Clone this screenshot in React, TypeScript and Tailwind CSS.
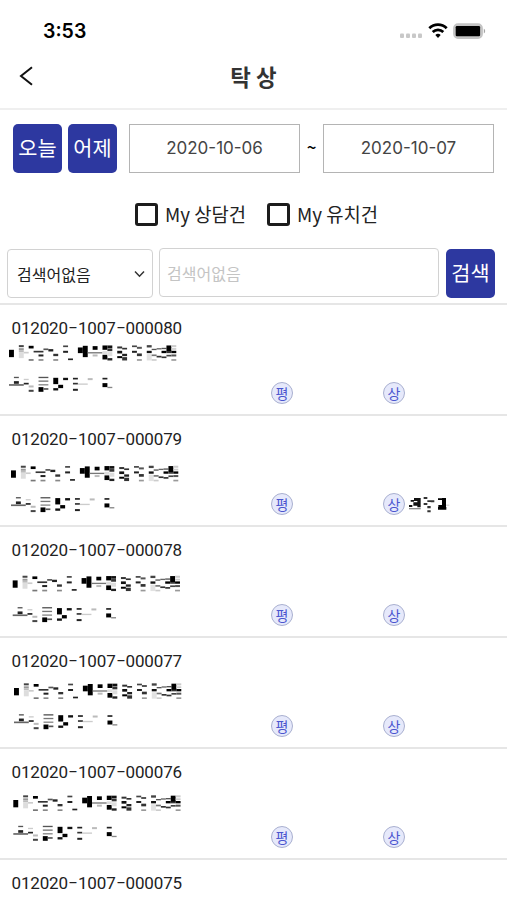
import { useState } from "react";

type Block = [x: number, y: number, w: number, h: number, fill: string];

type Consult = {
  id: string;
  // offsets of the two masked lines inside the row
  mask: { x: number; nameY: number; phoneY: number } | null;
  hasOwner?: boolean;
};

const CONSULTS: Consult[] = [
  { id: "012020-1007-000080", mask: { x: 9, nameY: 3.8, phoneY: 35.8 } },
  { id: "012020-1007-000079", mask: { x: 11, nameY: 13.4, phoneY: 45.1 }, hasOwner: true },
  { id: "012020-1007-000078", mask: { x: 12.7, nameY: 12.4, phoneY: 44.1 } },
  { id: "012020-1007-000077", mask: { x: 14, nameY: 9, phoneY: 40.2 } },
  { id: "012020-1007-000076", mask: { x: 13.3, nameY: 10, phoneY: 40.8 } },
  { id: "012020-1007-000075", mask: null },
];

// column, top, column span, height, fill
const NAME_BLOCKS: Block[] = [
  [0, 15, 1, 22, "#000"],
  [2, 1, 1, 6, "#444"],
  [2, 10, 1, 6, "#999"],
  [2, 16, 1, 6, "#bbb"],
  [2, 22, 1, 18, "#ddd"],
  [3, 21, 1, 5, "#ccc"],
  [4, 3, 1, 8, "#000"],
  [4, 43, 1, 5, "#777"],
  [5, 18, 2, 5, "#333"],
  [6, 29, 1, 6, "#222"],
  [6, 43, 1, 5, "#888"],
  [7, 11, 1, 5, "#555"],
  [8, 13, 1, 7, "#222"],
  [9, 27, 1, 7, "#333"],
  [9, 43, 1, 5, "#888"],
  [11, 2, 1, 5, "#444"],
  [11, 18, 1, 6, "#222"],
  [12, 41, 1, 5, "#222"],
  [14, 8, 1, 17, "#000"],
  [15, 3, 1, 34, "#000"],
  [16, 22, 3, 4, "#777"],
  [17, 4, 1, 11, "#000"],
  [17, 29, 1, 6, "#bbb"],
  [19, 2, 1, 13, "#000"],
  [19, 19, 1, 9, "#ddd"],
  [19, 30, 1, 14, "#000"],
  [20, 2, 1, 8, "#111"],
  [20, 11, 1, 8, "#333"],
  [20, 22, 1, 12, "#ddd"],
  [20, 40, 1, 7, "#222"],
  [22, 5, 1, 6, "#333"],
  [22, 18, 1, 8, "#111"],
  [22, 34, 1, 6, "#000"],
  [23, 9, 1, 5, "#333"],
  [23, 27, 1, 7, "#222"],
  [23, 37, 1, 10, "#333"],
  [25, 2, 1, 5, "#444"],
  [25, 18, 1, 6, "#222"],
  [26, 6, 1, 6, "#555"],
  [26, 26, 1, 8, "#333"],
  [26, 43, 1, 5, "#999"],
  [28, 1, 1, 7, "#444"],
  [28, 18, 1, 7, "#111"],
  [28, 28, 1, 19, "#e2e2e2"],
  [29, 12, 1, 4, "#555"],
  [29, 29, 1, 5, "#777"],
  [29, 43, 1, 5, "#ccc"],
  [30, 10, 1, 4, "#666"],
  [30, 33, 1, 5, "#333"],
  [31, 9, 1, 4, "#555"],
  [31, 18, 1, 7, "#000"],
  [31, 35, 1, 5, "#333"],
  [32, 2, 1, 19, "#000"],
  [32, 20, 1, 5, "#333"],
  [32, 30, 1, 5, "#444"],
  [33, 1, 1, 6, "#ccc"],
  [33, 10, 1, 5, "#ccc"],
  [33, 18, 1, 7, "#000"],
  [33, 29, 1, 6, "#555"],
  [33, 43, 1, 5, "#999"],
];

const PHONE_BLOCKS: Block[] = [
  [0, 22, 3, 5, "#666"],
  [1, 0, 1, 4, "#555"],
  [1, 13, 1, 8, "#222"],
  [3, 6, 1, 4, "#ccc"],
  [3, 18, 1, 5, "#222"],
  [4, 26, 1, 6, "#bbb"],
  [4, 39, 1, 6, "#444"],
  [6, 0, 2, 4, "#555"],
  [6, 11, 2, 4, "#777"],
  [6, 22, 2, 4, "#888"],
  [6, 31, 1, 14, "#000"],
  [7, 34, 1, 5, "#555"],
  [9, 3, 1, 19, "#000"],
  [9, 34, 1, 7, "#111"],
  [10, 24, 1, 10, "#000"],
  [11, 3, 1, 7, "#111"],
  [13, 3, 1, 5, "#222"],
  [13, 18, 1, 5, "#333"],
  [13, 36, 1, 6, "#222"],
  [14, 20, 2, 4, "#ccc"],
  [16, 4, 1, 6, "#bbb"],
  [19, 3, 1, 5, "#222"],
  [19, 19, 1, 12, "#000"],
  [20, 30, 1, 4, "#888"],
];

function Blocks({ blocks }: { blocks: Block[] }) {
  return (
    <>
      {blocks.map(([x, y, w, h, fill], i) => (
        <rect key={i} x={x * 4.92} y={y / 3} width={w * 4.92} height={h / 3} fill={fill} />
      ))}
    </>
  );
}

function OwnerMask() {
  return (
    <svg width="42" height="18" viewBox="0 0 126 54" className="ml-[3px] mt-[80px]">
      <path d="M8 12h10v5H8zM3 27h10v6H3zM18 6h20v9H18zM28 12h10v22H28zM16 19h12v10H16z" fill="#111" />
      <path d="M3 36h35v4H3z" fill="#888" />
      <path d="M47 3h11v6H47zM47 21h11v6H47zM58 13h11v5H58zM58 30h10v7H58zM58 43h10v6H58zM68 13h11v6H68z" fill="#333" />
      <path d="M90 33h25v8H90zM102 6h12v30h-12zM90 7h12v5H90zM91 27h11v8H91z" fill="#000" />
      <path d="M114 26h10v3h-10z" fill="#ccc" />
    </svg>
  );
}

function Badge({ label }: { label: string }) {
  return (
    <span className="mt-[77px] flex h-[22px] w-[22px] shrink-0 items-center justify-center rounded-full border border-[#a9b0d0] bg-[#e6e9fb] text-[14px] leading-none text-[#4a55cf]">
      <span className="-mt-px">{label}</span>
    </span>
  );
}

function ConsultRow({ item }: { item: Consult }) {
  return (
    <li className="flex h-[111px] items-start overflow-hidden border-t-2 border-[#e6e6e6]">
      <div className="w-[271px] shrink-0">
        <div className="flex h-[36px] pl-[11.5px] pt-[11px] font-['Roboto','Liberation_Sans',sans-serif] text-[17px] leading-[24px] text-[#222]">
          {item.id.split(/(-)/).map((part, i) =>
            part === "-" ? (
              <span key={i} className="-mt-px inline-block w-[10px] origin-center scale-x-[1.7] text-center">
                -
              </span>
            ) : (
              <span key={i} className="tracking-[-0.15px]">
                {part}
              </span>
            ),
          )}
        </div>
        {item.mask ? (
          <svg width="200" height="70">
            <g transform={`translate(${item.mask.x} ${item.mask.nameY})`}>
              <Blocks blocks={NAME_BLOCKS} />
            </g>
            <g transform={`translate(${item.mask.x} ${item.mask.phoneY})`}>
              <Blocks blocks={PHONE_BLOCKS} />
            </g>
          </svg>
        ) : null}
      </div>
      {item.mask ? (
        <>
          <div className="flex w-[112px] shrink-0">
            <Badge label="평" />
          </div>
          <div className="flex">
            <Badge label="상" />
            {item.hasOwner ? <OwnerMask /> : null}
          </div>
        </>
      ) : null}
    </li>
  );
}

function StatusBar() {
  return (
    <div className="flex h-[52px] shrink-0 items-start justify-between pl-[43px] pr-[20px] pt-[20px]">
      <span className="font-['Inter','Liberation_Sans',sans-serif] text-[19.5px] font-semibold leading-[23px] text-black">
        3:53
      </span>
      <svg width="88" height="22" viewBox="0 0 88 22">
        <g fill="#c8c8c8">
          <rect x="1" y="13.5" width="4" height="4.5" rx="1" />
          <rect x="7" y="13.5" width="4" height="4.5" rx="1" />
          <rect x="13" y="13.5" width="4" height="4.5" rx="1" />
          <rect x="19" y="13.5" width="4" height="4.5" rx="1" />
        </g>
        <g fill="none" stroke="#000" strokeWidth="2.7">
          <path d="M30.3 8.2a12.4 12.4 0 0 1 17.4 0" />
          <path d="M33.7 12a7.6 7.6 0 0 1 10.6 0" />
        </g>
        <path d="M36.3 15a4 4 0 0 1 5.4 0L39 18z" fill="#000" />
        <rect x="54.8" y="4" width="28.4" height="14.2" rx="4.2" fill="#c4c4c4" stroke="#c4c4c4" strokeWidth="1.4" />
        <rect x="56.7" y="6" width="24.4" height="10.3" rx="1.2" fill="#000" />
        <path d="M84.8 8.8c1.8.6 1.8 4 0 4.6z" fill="#a5a5a5" />
      </svg>
    </div>
  );
}

function Check({ label }: { label: string }) {
  const [checked, setChecked] = useState(false);
  return (
    <label className="flex items-center gap-[7px] text-[18.8px] leading-[26px] text-[#222]">
      <input
        type="checkbox"
        checked={checked}
        onChange={() => setChecked(!checked)}
        className="h-[23px] w-[23px] appearance-none rounded-[3px] border-[3px] border-[#1c1c1c] checked:bg-[#2d38a0]"
      />
      <span className="w-[82px] whitespace-nowrap">{label}</span>
    </label>
  );
}

const BLUE_BUTTON =
  "flex h-[49px] w-[49px] shrink-0 items-center justify-center rounded-[5px] bg-[#2d38a0] pb-[2px] text-[20.8px] leading-none text-white whitespace-nowrap";

const DATE_BOX =
  "flex h-[49px] w-[171px] items-center justify-center border border-[#b4b4b4] font-['Inter','Liberation_Sans',sans-serif] text-[17px] text-[#444]";

export default function App() {
  return (
    <div className="flex h-[900px] w-[507px] flex-col overflow-hidden bg-white font-['Noto_Sans_CJK_KR',sans-serif]">
      <StatusBar />
      <header className="grid h-[58px] shrink-0 grid-cols-[1fr_auto_1fr] items-center border-b-2 border-[#efefef] pb-[9px]">
        <button type="button" className="pl-[19px]">
          <svg width="15" height="20" viewBox="0 0 15 20" fill="none" stroke="#111" strokeWidth="2">
            <path d="M13 1.2L2 10l11 8.8" />
          </svg>
        </button>
        <h1 className="text-[22.4px] font-bold leading-[30px] text-[#333]">탁 상</h1>
      </header>

      <section className="h-[193px] shrink-0">
        <div className="flex pl-[13px] pt-[14px]">
          <button type="button" className={BLUE_BUTTON}>
            오늘
          </button>
          <button type="button" className={`${BLUE_BUTTON} ml-[6px]`}>
            어제
          </button>
          <div className={`${DATE_BOX} ml-[12px]`}>2020-10-06</div>
          <span className="flex w-[23px] items-center justify-center pb-[3px] text-[17px] font-medium text-black">
            ~
          </span>
          <div className={DATE_BOX}>2020-10-07</div>
        </div>

        <div className="flex gap-[20px] pl-[135px] pt-[28px]">
          <Check label="My 상담건" />
          <Check label="My 유치건" />
        </div>

        <div className="flex pl-[7px] pt-[21px]">
          <div className="mt-px flex h-[49px] w-[146px] items-center justify-between rounded-[4px] border border-[#d2d2d2] pl-[9px] pr-[7px] text-[16px] text-[#222]">
            <span>검색어없음</span>
            <svg width="11" height="8" viewBox="0 0 11 8" fill="none" stroke="#333" strokeWidth="1.5">
              <path d="M1 1.5l4.5 4.7L10 1.5" />
            </svg>
          </div>
          <input
            placeholder="검색어없음"
            className="ml-[6px] h-[49px] w-[280px] rounded-[4px] border border-[#d2d2d2] px-[7px] text-[16px] outline-none placeholder:text-[#c4c4c4]"
          />
          <button type="button" className={`${BLUE_BUTTON} ml-[7px] mt-px`}>
            검색
          </button>
        </div>
      </section>

      <ul>
        {CONSULTS.map((item) => (
          <ConsultRow key={item.id} item={item} />
        ))}
      </ul>
    </div>
  );
}
